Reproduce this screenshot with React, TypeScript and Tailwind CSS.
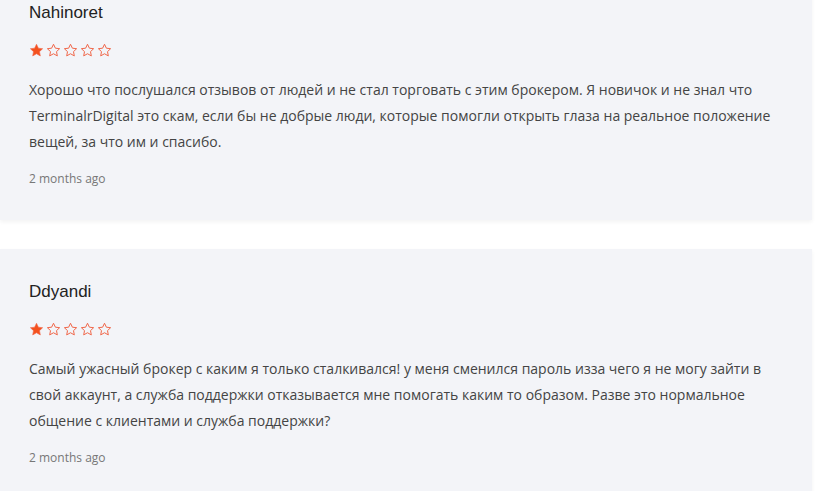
const reviews = [
  {
    name: "Nahinoret",
    text: "Хорошо что послушался отзывов от людей и не стал торговать с этим брокером. Я новичок и не знал что TerminalrDigital это скам, если бы не добрые люди, которые помогли открыть глаза на реальное положение вещей, за что им и спасибо.",
    date: "2 months ago",
    rating: 1,
  },
  {
    name: "Ddyandi",
    text: "Самый ужасный брокер с каким я только сталкивался! у меня сменился пароль изза чего я не могу зайти в свой аккаунт, а служба поддержки отказывается мне помогать каким то образом. Разве это нормальное общение с клиентами и служба поддержки?",
    date: "2 months ago",
    rating: 1,
  },
];

const Star = ({ filled }: { filled: boolean }) => (
  <svg width="15" height="15" viewBox="0 0 24 24" className="shrink-0">
    <path
      d="M12 2l3 6.3 6.8.8-5 4.7 1.3 6.8L12 17.2l-6.1 3.4 1.3-6.8-5-4.7 6.8-.8z"
      fill={filled ? "#f4511e" : "none"}
      stroke="#f0674a"
      strokeWidth={filled ? 1 : 1.6}
      strokeLinejoin="round"
    />
  </svg>
);

const ReviewCard = ({ review }: { review: (typeof reviews)[number] }) => (
  <div className="bg-[#f3f4f8] shadow-[0_2px_4px_rgba(0,0,0,0.05)] pl-[29px] pr-[40px] pt-[33px] h-[250px]">
    <h3 className="font-['Liberation_Sans',Arial,sans-serif] text-[17px] leading-[20px] text-[#222]">
      {review.name}
    </h3>
    <div className="flex gap-[2px] mt-[20px]">
      {[0, 1, 2, 3, 4].map((i) => (
        <Star key={i} filled={i < review.rating} />
      ))}
    </div>
    <p className="font-['Open_Sans',sans-serif] text-[14px] leading-[26px] text-[#444] mt-[19px] max-w-[750px]">
      {review.text}
    </p>
    <div className="font-['Open_Sans',sans-serif] text-[12px] leading-[16px] text-[#777] mt-[16px]">
      {review.date}
    </div>
  </div>
);

export default function App() {
  return (
    <div className="w-[815px] h-[491px] overflow-hidden bg-white">
      <div className="-mt-[30px] pr-[3px] flex flex-col gap-[29px]">
        {reviews.map((r) => (
          <ReviewCard key={r.name} review={r} />
        ))}
      </div>
    </div>
  );
}
